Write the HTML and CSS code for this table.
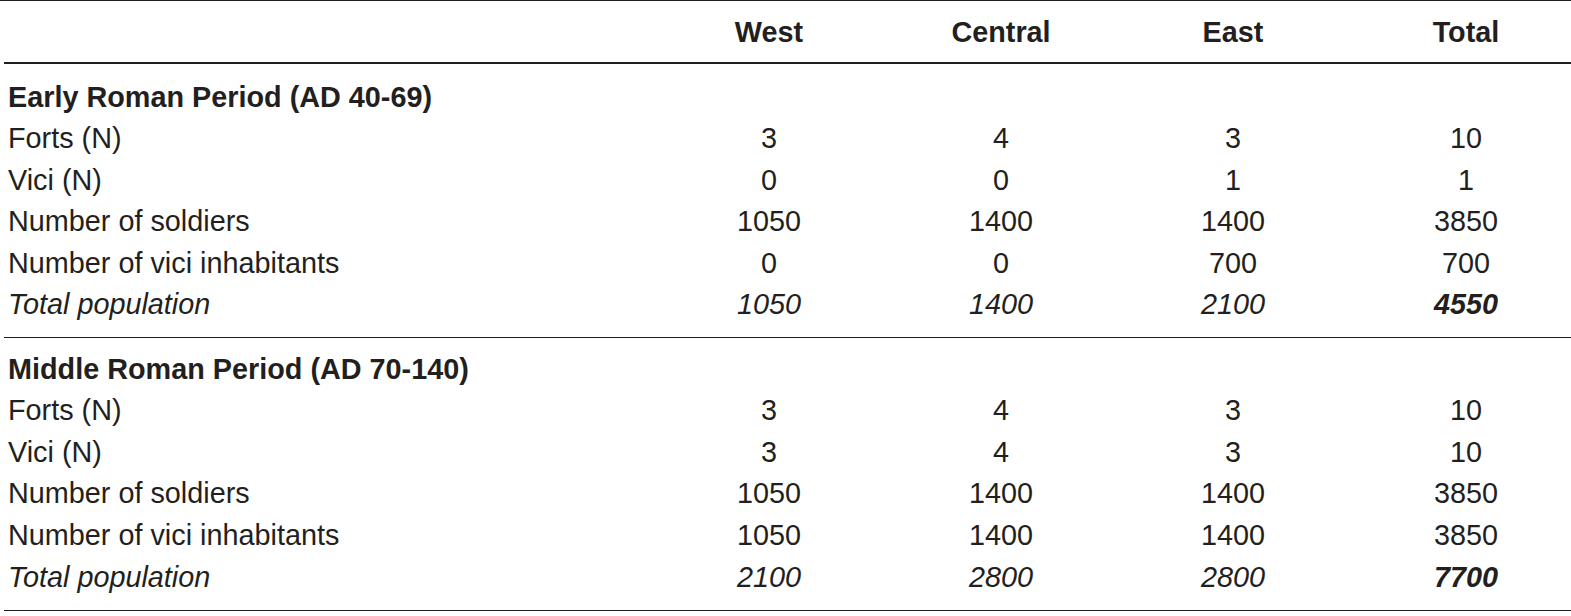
FILE: index.html
```html
<!DOCTYPE html>
<html lang="en">
<head>
<meta charset="utf-8">
<title>Roman population table</title>
<link rel="stylesheet" href="styles.css">
</head>
<body>
<div class="wrap">
<table class="data">
  <colgroup>
    <col class="c-label">
    <col class="c-num">
    <col class="c-num">
    <col class="c-num">
    <col class="c-total">
  </colgroup>
  <thead>
    <tr>
      <th class="label"></th>
      <th>West</th>
      <th>Central</th>
      <th>East</th>
      <th class="last">Total</th>
    </tr>
  </thead>
  <tbody class="section">
    <tr class="head-row"><td class="label period" colspan="5">Early Roman Period (AD 40-69)</td></tr>
    <tr><td class="label">Forts (N)</td><td>3</td><td>4</td><td>3</td><td class="last">10</td></tr>
    <tr><td class="label">Vici (N)</td><td>0</td><td>0</td><td>1</td><td class="last">1</td></tr>
    <tr><td class="label">Number of soldiers</td><td>1050</td><td>1400</td><td>1400</td><td class="last">3850</td></tr>
    <tr><td class="label">Number of vici inhabitants</td><td>0</td><td>0</td><td>700</td><td class="last">700</td></tr>
    <tr class="total-row"><td class="label">Total population</td><td>1050</td><td>1400</td><td>2100</td><td class="last grand">4550</td></tr>
  </tbody>
  <tbody class="section">
    <tr class="head-row"><td class="label period" colspan="5">Middle Roman Period (AD 70-140)</td></tr>
    <tr><td class="label">Forts (N)</td><td>3</td><td>4</td><td>3</td><td class="last">10</td></tr>
    <tr><td class="label">Vici (N)</td><td>3</td><td>4</td><td>3</td><td class="last">10</td></tr>
    <tr><td class="label">Number of soldiers</td><td>1050</td><td>1400</td><td>1400</td><td class="last">3850</td></tr>
    <tr><td class="label">Number of vici inhabitants</td><td>1050</td><td>1400</td><td>1400</td><td class="last">3850</td></tr>
    <tr class="total-row"><td class="label">Total population</td><td>2100</td><td>2800</td><td>2800</td><td class="last grand">7700</td></tr>
  </tbody>
</table>
</div>
</body>
</html>
```

FILE: styles.css
```css
html, body {
  margin: 0;
  padding: 0;
  background: #ffffff;
  overflow: hidden;
}

.wrap {
  border-top: 1px solid #231f20;
  padding-left: 4px;
  width: 1567px;
}

.data {
  width: 1567px;
  border-collapse: collapse;
  table-layout: fixed;
  font-family: "Liberation Sans", Arial, sans-serif;
  font-size: 28.8px;
  color: #231f20;
}

.c-label { width: 649px; }
.c-num { width: 232px; }
.c-total { width: 222px; }

.data th,
.data td {
  padding: 0;
  text-align: center;
  white-space: nowrap;
  line-height: 41.6px;
  height: 41.6px;
}

.data th {
  font-weight: bold;
  height: 60px;
  line-height: 60px;
  padding-top: 1px;
  border-bottom: 2px solid #231f20;
}

.data .label {
  text-align: left;
  padding-left: 4px;
}

.data .last {
  padding-left: 12px;
}

.data .period {
  font-weight: bold;
}

.head-row td {
  padding-top: 12.5px;
}

.total-row td {
  font-style: italic;
  padding-bottom: 10.5px;
  border-bottom: 1px solid #231f20;
}

.section + .section .head-row td {
  padding-top: 11px;
}

.section + .section .total-row td {
  padding-bottom: 11.5px;
}

.total-row .grand {
  font-weight: bold;
}
```
